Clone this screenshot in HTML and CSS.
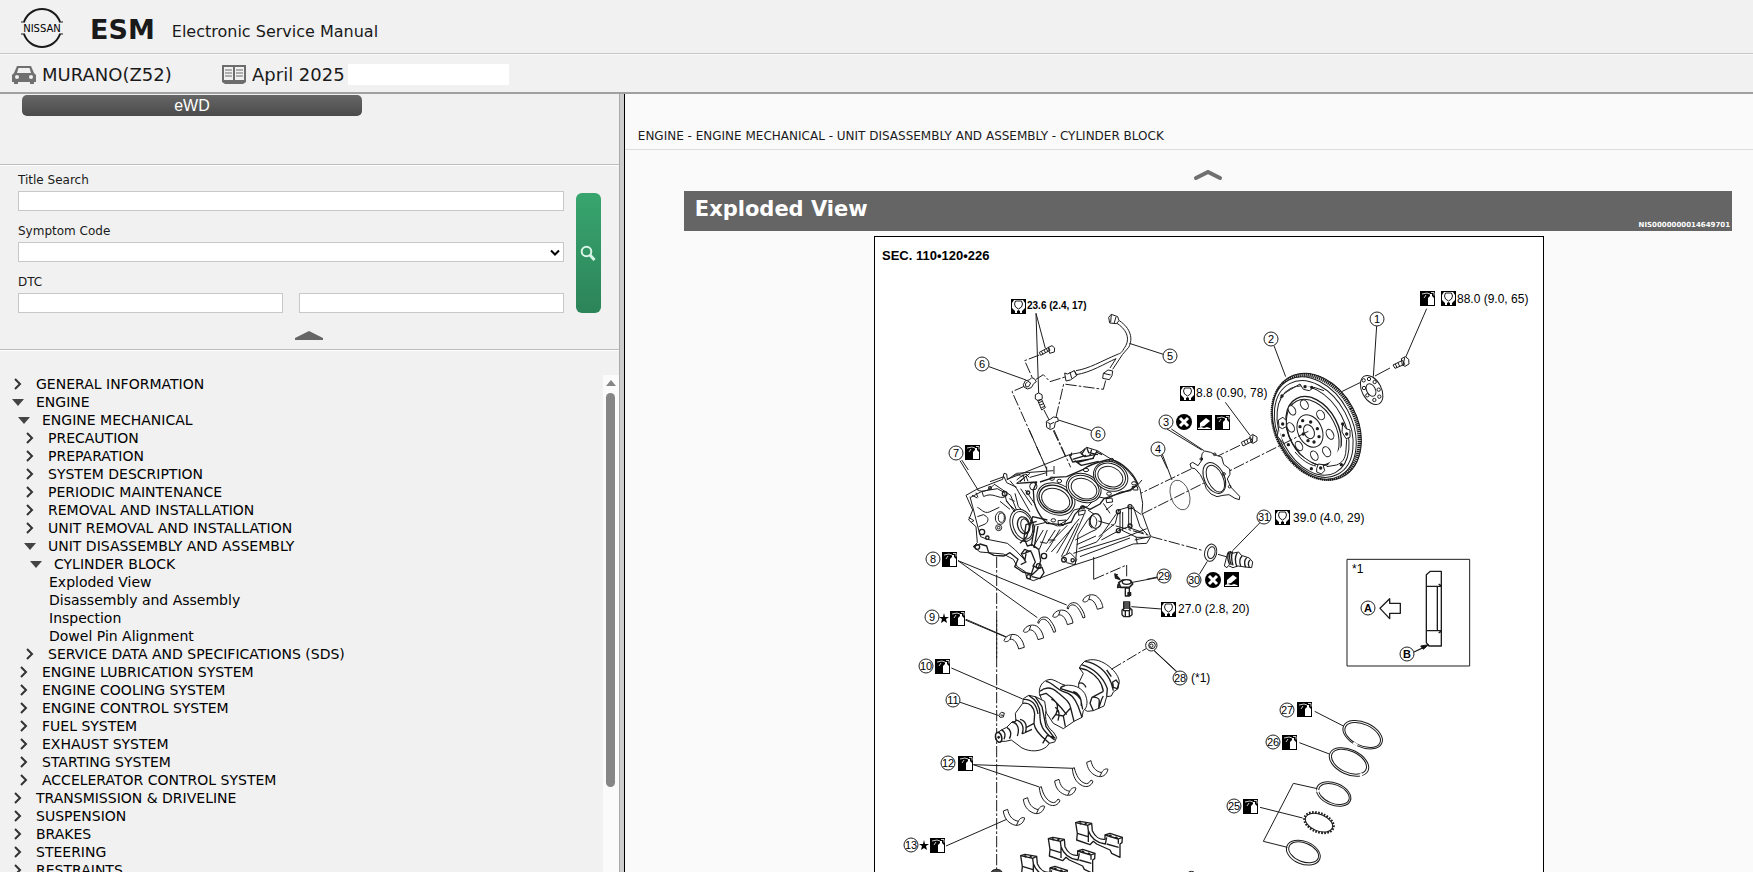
FILE: index.html
```html
<!DOCTYPE html>
<html lang="en">
<head>
<meta charset="utf-8">
<title>ESM Electronic Service Manual</title>
<link rel="stylesheet" href="styles.css">
</head>
<body>
<svg class="defs" aria-hidden="true">
  <defs>
    <symbol id="closed" viewBox="0 0 10 14"><path d="M2 2l5 5-5 5" fill="none" stroke="#333" stroke-width="2"/></symbol>
    <symbol id="open" viewBox="0 0 12 14"><path d="M0 4h12l-6 7z" fill="#444"/></symbol>
    <symbol id="torque" viewBox="0 0 15 15"><path d="M0 0h15v15H0z"/><path d="M3 1h9l2 3v5l-3 3v2H9v-2l-1.500-1L6 12v2H4v-2L1 9V4z" fill="#fff"/><path d="M4.500 2h6l1 3-1 3-3 2-3-2-1-3z" fill="#fff" stroke="#000" stroke-width=".9"/><path d="M6 12h3v3H6z"/></symbol>
    <symbol id="oil" viewBox="0 0 15 15"><path d="M0 0h15v15H0z"/><path d="M8 14V7l2-2V3h2v2l2 2v7z" fill="#fff"/><path d="M2 3l5-1 3 1M6 4L4 7M11 1.500h3v3" stroke="#fff" fill="none" stroke-width=".8"/></symbol>
    <symbol id="seal" viewBox="0 0 15 15"><path d="M0 0h15v15H0z"/><path d="M3 8l6-5 4 3-6 5-4 1zM1 13l3-1 3 1 3-1 3 1 1 1H1z" fill="#fff"/></symbol>
    <symbol id="cross" viewBox="0 0 16 16"><circle cx="8" cy="8" r="8"/><path d="M4 4l8 8M12 4l-8 8" stroke="#fff" stroke-width="3"/></symbol>
  </defs>
</svg>

<header class="brand">
  <svg class="logo" viewBox="0 0 48 40" role="img" aria-label="Nissan">
    <path d="M6 14a19 19 0 0 1 36 0M6 26a19 19 0 0 0 36 0" fill="none" stroke="#1a1a1a" stroke-width="2"/>
    <path d="M3 14h4M41 14h4M3 26h4M41 26h4" stroke="#1a1a1a"/>
    <text x="24" y="24" text-anchor="middle" class="logo-text">NISSAN</text>
  </svg>
  <h1>ESM</h1>
  <span class="tagline">Electronic Service Manual</span>
</header>

<div class="vehicle">
  <svg class="vehicle-icon" viewBox="0 0 24 20"><path d="M5 1h14l3 7 2 2v7h-2v2h-4v-2H6v2H2v-2H0v-7l2-2z" fill="#707070"/><path d="M6.500 3h11L19 8H5z" fill="#f1f1f1"/><circle cx="5" cy="12" r="2" fill="#f1f1f1"/><circle cx="19" cy="12" r="2" fill="#f1f1f1"/></svg>
  <span class="model">MURANO(Z52)</span>
  <svg class="vehicle-icon" viewBox="0 0 24 20"><path d="M0 0h24v17l-3 2H3l-3-2z" fill="#6d6d6d"/><path d="M2 2h9v13H2zM13 2h9v13h-9z" fill="#f1f1f1"/><path d="M3 5h7M3 8h7M3 11h7M14 5h7M14 8h7M14 11h7" stroke="#6d6d6d"/></svg>
  <span class="edition">April 2025</span>
  <span class="blank"></span>
</div>

<main class="panes">
  <aside class="side">
    <div class="shortcuts"><button class="ewd" type="button">eWD</button></div>
    <form class="search">
      <div class="fields">
        <label for="title">Title Search</label>
        <input id="title" type="text">
        <label for="symptom">Symptom Code</label>
        <span class="select-box"><select id="symptom"><option></option></select>
          <svg viewBox="0 0 10 8"><path d="M1 1.500l4 4 4-4" fill="none" stroke="#000" stroke-width="2"/></svg></span>
        <label for="dtc">DTC</label>
        <div class="pair"><input id="dtc" type="text"><input type="text" aria-label="DTC second code"></div>
      </div>
      <button class="go" type="submit" aria-label="Search"><svg viewBox="0 0 16 16"><circle cx="6.500" cy="6.500" r="4.800" fill="none" stroke="#d9f5e6" stroke-width="2"/><path d="M10 10l4.500 5" stroke="#d9f5e6" stroke-width="3"/></svg></button>
      <button class="fold" type="button" aria-label="Collapse search"><svg viewBox="0 0 28 9"><path d="M0 7L14 0l14 7v2H0z" fill="#666"/></svg></button>
    </form>
    <div class="tree-area">
      <nav class="tree" aria-label="Contents">
        <ul>
          <li><button type="button"><svg><use href="#closed"/></svg>GENERAL INFORMATION</button></li>
          <li><button type="button"><svg><use href="#open"/></svg>ENGINE</button>
            <ul>
              <li><button type="button"><svg><use href="#open"/></svg>ENGINE MECHANICAL</button>
                <ul>
                  <li><button type="button"><svg><use href="#closed"/></svg>PRECAUTION</button></li>
                  <li><button type="button"><svg><use href="#closed"/></svg>PREPARATION</button></li>
                  <li><button type="button"><svg><use href="#closed"/></svg>SYSTEM DESCRIPTION</button></li>
                  <li><button type="button"><svg><use href="#closed"/></svg>PERIODIC MAINTENANCE</button></li>
                  <li><button type="button"><svg><use href="#closed"/></svg>REMOVAL AND INSTALLATION</button></li>
                  <li><button type="button"><svg><use href="#closed"/></svg>UNIT REMOVAL AND INSTALLATION</button></li>
                  <li><button type="button"><svg><use href="#open"/></svg>UNIT DISASSEMBLY AND ASSEMBLY</button>
                    <ul>
                      <li><button type="button"><svg><use href="#open"/></svg>CYLINDER BLOCK</button>
                        <ul class="leaves">
                          <li><a href="#view">Exploded View</a></li>
                          <li><a href="#assembly">Disassembly and Assembly</a></li>
                          <li><a href="#inspection">Inspection</a></li>
                          <li><a href="#dowel">Dowel Pin Alignment</a></li>
                        </ul>
                      </li>
                    </ul>
                  </li>
                  <li><button type="button"><svg><use href="#closed"/></svg>SERVICE DATA AND SPECIFICATIONS (SDS)</button></li>
                </ul>
              </li>
              <li><button type="button"><svg><use href="#closed"/></svg>ENGINE LUBRICATION SYSTEM</button></li>
              <li><button type="button"><svg><use href="#closed"/></svg>ENGINE COOLING SYSTEM</button></li>
              <li><button type="button"><svg><use href="#closed"/></svg>ENGINE CONTROL SYSTEM</button></li>
              <li><button type="button"><svg><use href="#closed"/></svg>FUEL SYSTEM</button></li>
              <li><button type="button"><svg><use href="#closed"/></svg>EXHAUST SYSTEM</button></li>
              <li><button type="button"><svg><use href="#closed"/></svg>STARTING SYSTEM</button></li>
              <li><button type="button"><svg><use href="#closed"/></svg>ACCELERATOR CONTROL SYSTEM</button></li>
            </ul>
          </li>
          <li><button type="button"><svg><use href="#closed"/></svg>TRANSMISSION &amp; DRIVELINE</button></li>
          <li><button type="button"><svg><use href="#closed"/></svg>SUSPENSION</button></li>
          <li><button type="button"><svg><use href="#closed"/></svg>BRAKES</button></li>
          <li><button type="button"><svg><use href="#closed"/></svg>STEERING</button></li>
          <li><button type="button"><svg><use href="#closed"/></svg>RESTRAINTS</button></li>
        </ul>
      </nav>
      <div class="scroll"><svg viewBox="0 0 10 6"><path d="M0 6l5-6 5 6z" fill="#858585"/></svg><div class="thumb"></div></div>
    </div>
  </aside>
  <div class="splitter"></div>

  <section class="content">
    <p class="crumbs">ENGINE - ENGINE MECHANICAL - UNIT DISASSEMBLY AND ASSEMBLY - CYLINDER BLOCK</p>
    <button class="up" type="button" aria-label="Collapse header"><svg viewBox="0 0 30 12"><path d="M3 9l12-6 12 6" fill="none" stroke="#707070" stroke-width="4" stroke-linecap="round"/></svg></button>
    <div class="heading" id="view"><h2>Exploded View</h2><span>NIS0000000014649701</span></div>
    <figure class="figure">
      <svg viewBox="875 237 668 700" role="img" aria-label="Cylinder block exploded view">
        <!-- wiring harness and sensors -->
        <g class="ink" transform="translate(870 230) scale(.333333)">
          <path class="lead" d="M498 250L526 355M498 250L506 490M357 410L468 450M778 340L880 373M565 570L665 602M275 690L295 720M891 597L995 660M873 676L892 716"/>
          <path class="axis" d="M508 375L464 392 490 450M498 448L520 434 540 455 588 440M465 468L426 485 530 718M522 540L540 575M550 602L610 730M558 562L581 462 700 478 708 448"/>
          <path d="M738 278C768 296 780 322 768 346C758 362 755 370 745 372C690 395 660 415 618 422M748 272C782 295 790 326 776 352L757 374 728 418M618 434C662 428 705 400 738 386L720 414"/>
          <path class="solid" d="M716 262l8-9 19 7 4 12-8 9-20-2zM724 253l-2 24M738 261l-6 20M584 429l9 3 20-10 8 14-20 14-13 3zM613 422l6 14M600 426l5 19M700 430l14-10 14 3-2 14-8 12-20-4zM700 430l22 5M508 367l28-15 4 9-28 15zM535 352l11-5 8 7-1 12-14 4zM514 364l5 9M522 360l5 9M529 356l5 9M496 494l10-5 10 5 1 12-11 7-10-6zM503 511l12-3 11 25-11 7zM506 518l11-4M510 525l11-4M514 533l11-4"/>
          <path class="solid" d="M460 464l6-12 12-2 7-7 8 3 6 9-8 6-7 12-12 4-10-6zM466 462l8-8 8 5-6 11-8 1zM529 574l13-7 8-6 13 2 2 11-9 2-3 17-12 6-11-7zM532 577l10 5 10-5M540 582v14"/>
        </g>
        <!-- flywheel, drive plate, seal retainer -->
        <g class="ink" transform="translate(1160 230) scale(.333333)">
          <path class="lead" d="M342 347L377 440M650 288L640 440M800 236L736 384M196 517L270 616M34 597L132 662M5 668L36 750"/>
          <path class="lead" d="M690 414L645 438M612 452L545 485"/>
          <g transform="rotate(-28 470 590)"><ellipse cx="470" cy="590" rx="122" ry="169" class="solid"/><ellipse cx="468" cy="590" rx="119" ry="165" class="teeth"/><ellipse cx="462" cy="590" rx="113" ry="163" class="solid"/><ellipse cx="459" cy="592" rx="106" ry="154"/><ellipse cx="455" cy="595" rx="96" ry="143"/><ellipse cx="456" cy="597" rx="74" ry="110" stroke-width="4"/><ellipse cx="452" cy="599" rx="70" ry="105"/></g>
          <path class="solid" d="M420 462l10 16 18 4 14-10 30 10M355 570l14-8 10 10v18l-12 6-10-5zM356 592l-4 26 16 20M470 716l5-14 14 2 5 18-10 10-14-6zM548 580l10 16 12 4v22l-12 4-12-20zM420 462C390 480 372 488 360 505M560 628L558 660C556 690 545 698 530 705L500 710M468 708C448 705 425 690 405 666"/>
          <g class="solid"><ellipse cx="433" cy="524" rx="11" ry="15" transform="rotate(-28 433 524)"/><ellipse cx="396" cy="541" rx="10" ry="15" transform="rotate(-28 396 541)"/><ellipse cx="482" cy="555" rx="11" ry="15" transform="rotate(-28 482 555)"/><ellipse cx="392" cy="592" rx="10" ry="15" transform="rotate(-28 392 592)"/><ellipse cx="510" cy="613" rx="10" ry="16" transform="rotate(-28 510 613)"/><ellipse cx="417" cy="648" rx="10" ry="15" transform="rotate(-28 417 648)"/><ellipse cx="500" cy="665" rx="11" ry="16" transform="rotate(-28 500 665)"/><ellipse cx="463" cy="677" rx="10" ry="15" transform="rotate(-28 463 677)"/></g>
          <ellipse class="solid" cx="450" cy="603" rx="36" ry="51" transform="rotate(-25 450 603)"/><ellipse cx="447" cy="605" rx="15" ry="22" transform="rotate(-25 447 605)"/>
          <path d="M428 572h.1M420 590h.1M430 612h.1M444 632h.1M462 636h.1M477 620h.1M472 596h.1M452 576h.1" stroke-width="10" stroke-linecap="round"/>
          <path class="dots" d="M435 470h.1M455 472h.1M366 498h.1M368 582h.1M370 616h.1M385 644h.1M454 716h.1M482 714h.1M544 704h.1M560 612h.1M548 582h.1"/>
          <ellipse class="solid" cx="635" cy="480" rx="29" ry="47" transform="rotate(-28 635 480)"/><ellipse cx="633" cy="480" rx="13" ry="20" transform="rotate(-28 633 480)"/>
          <g><circle cx="611" cy="451" r="5"/><circle cx="627" cy="447" r="5"/><circle cx="644" cy="456" r="5"/><circle cx="612" cy="474" r="5"/><circle cx="622" cy="496" r="5"/><circle cx="643" cy="510" r="5"/><circle cx="658" cy="500" r="5"/><circle cx="656" cy="479" r="5"/></g>
          <path class="solid" d="M699 405l29-14 6 12-29 12zM724 386l12-6 10 8 1 14-12 7-8-4zM706 402l5 11M714 398l5 11M734 382l-4 22M244 637l28-14 5 11-28 14zM269 620l9-7 13 8v12l-12 7-6-3zM252 633l5 11M260 629l5 11M279 615l-2 23"/>
          <path class="axis" d="M445 604L210 722M240 646L-265 890M170 740L-250 950"/>
        </g>
        <g class="ink" transform="translate(1150 450) scale(.333333)">
          <path class="solid" d="M120 42l8-5 16 10 10-14 2-22 8-8 18 4 20 10 13 4 6 22 18 14 1 16-8 14 10 24 27 28-1 10-13-4-18-11-18 2-18 4-18-8-14-16-6-18-12-24-16-18-11-2z"/>
          <ellipse cx="193" cy="84" rx="30" ry="49" transform="rotate(-25 193 84)"/><ellipse cx="196" cy="86" rx="23" ry="43" transform="rotate(-25 196 86)"/>
          <circle cx="154" cy="27" r="4"/><circle cx="222" cy="72" r="4"/><circle cx="239" cy="110" r="4"/><circle cx="194" cy="13" r="4"/>
          <ellipse cx="90" cy="135" rx="28" ry="46" transform="rotate(-18 90 135)" stroke-width="2"/>
          <path class="axis" d="M4 260L160 302M204 313L232 321"/><path class="lead" d="M148 373L172 334M330 218L248 302M-10 388L22 381M-56 470L34 477M78 664L12 602"/>
          <ellipse class="solid" cx="182" cy="308" rx="18" ry="26" transform="rotate(12 182 308)"/><ellipse cx="184" cy="308" rx="11" ry="18" transform="rotate(12 184 308)"/>
          <path class="solid" d="M230 320l4-13 9-3 3 6 20-4 8 10 24 8 10 12-3 17-20-2-22-3-14 5-14-6-4 6-8-5z"/><path d="M237 306c-6 12-4 25 2 38M242 305c-6 12-4 25 2 40M248 304c-6 12-4 25 1 42M262 307c-8 14-8 28-1 44M276 318c-7 8-8 20-4 30M290 323c-7 8-8 18-3 29M300 330c-6 6-6 14-2 22" stroke-width="4"/>
          <path d="M591 328h368v320H591z"/><path d="M841 364h33v224h-37l-8-10V374zM829 409h45M829 542h45M862 409v133M866 402l8 6M866 549l8-6M751 460h-32v-14l-29 29 29 31v-16h32zM792 606l34-16" stroke-width="4"/><path d="M836 584l-24 4 8 10z" fill="#111"/>
        </g>
        <!-- cylinder block -->
        <g class="ink" transform="translate(900 430) scale(.333333)">
          <path class="axis" d="M290 380V690"/>
          <path class="solid" d="M198 196L230 178 308 148 312 130 320 132 322 148 508 74 540 68 560 52 592 62 628 84 670 108 700 142 720 176 728 220 726 248 752 320 740 340 700 342 600 380 520 406 400 452 380 444 376 425 352 410 340 388 310 372 240 366 220 350 232 338 228 290 206 270 218 240z"/>
          <path d="M270 155L312 140L320 158 350 172M282 162l50 34 20 50 50 40 40-10 30 12 30-18 20-30 40-10 30-30 30 6 40-20 30-4 24-20 10-12M230 178c20 14 40 0 52-14M320 150L350 130 460 122M350 160L390 130M330 152l20 24M350 176l40 70M362 176l34 50M376 180l30 44M345 190l10 40 20 18"/>
          <path d="M350 160L410 156 400 180 402 214C410 246 430 270 440 280L490 284 514 276 524 254 548 228 570 238 600 222 612 206 640 196 690 180 714 162C694 118 650 84 620 90C580 100 560 110 550 118L500 140 462 142 420 156" stroke-width="4"/>
          <ellipse class="solid" cx="468" cy="207" rx="59" ry="46" transform="rotate(25 468 207)"/><ellipse cx="467" cy="207" rx="52" ry="39" transform="rotate(25 467 207)" stroke-width="4"/><ellipse cx="467" cy="209" rx="44" ry="32" transform="rotate(25 467 209)"/>
          <ellipse class="solid" cx="551" cy="174" rx="54" ry="42" transform="rotate(24 551 174)"/><ellipse cx="551" cy="174" rx="48" ry="36" transform="rotate(24 551 174)"/><ellipse cx="552" cy="176" rx="40" ry="29" transform="rotate(24 552 176)"/>
          <ellipse class="solid" cx="632" cy="139" rx="53" ry="43" transform="rotate(24 632 139)"/><ellipse cx="631" cy="138" rx="47" ry="37" transform="rotate(24 631 138)"/><ellipse cx="631" cy="140" rx="39" ry="29" transform="rotate(24 631 140)"/>
          <g><circle cx="400" cy="169" r="11"/><ellipse cx="456" cy="146" rx="7" ry="5"/><ellipse cx="478" cy="153" rx="7" ry="5"/><ellipse cx="558" cy="120" rx="8" ry="5"/><ellipse cx="460" cy="271" rx="7" ry="5"/><ellipse cx="548" cy="232" rx="7" ry="5"/><ellipse cx="627" cy="191" rx="7" ry="5"/><ellipse cx="702" cy="160" rx="7" ry="5"/><ellipse cx="634" cy="90" rx="7" ry="5"/><path d="M474 272l25-2-8 16-15 2zM536 244l20-4-2 12-18 4zM618 206l18-2 2 12-18 2zM696 170l16 0 2 10-14 0z"/></g>
          <path d="M508 74l10 22 60-10 14-24M518 88l40-12M530 98l52-14M515 68l-2 10M540 66l14 14 30-6M560 52l6 16 28 6M524 92l20 14 52-12M556 56l-12 18M575 58l-6 20M588 66l18 8" stroke-width="4"/>
          <path d="M210 200l8 30 18 70 6 20 20 8 60 12 24 20 28 30M212 202l34-18 46-8 22 12 6 28 32 30 14 28M216 196l16 8M228 188l6 14M246 184l4 14M250 200c30-16 46 10 66 0M232 232c10 4 20 20 36 14l30-14M232 260l18-6c14 6 20 16 6 28l-20 8M206 262l16 10-8 4"/>
          <ellipse class="solid" cx="366" cy="286" rx="34" ry="50" transform="rotate(-20 366 286)"/><ellipse cx="368" cy="286" rx="28" ry="43" transform="rotate(-20 368 286)"/><ellipse cx="371" cy="286" rx="18" ry="26" transform="rotate(-15 371 286)" stroke-width="4"/><ellipse cx="375" cy="287" rx="12" ry="21" transform="rotate(-15 375 287)"/>
          <ellipse cx="301" cy="264" rx="15" ry="19"/><ellipse cx="304" cy="263" rx="9" ry="14"/><circle cx="296" cy="293" r="9"/><circle cx="296" cy="293" r="4"/>
          <g stroke-width="4"><circle cx="314" cy="191" r="7"/><circle cx="270" cy="174" r="4"/><circle cx="384" cy="188" r="5"/><circle cx="246" cy="306" r="8"/><circle cx="262" cy="323" r="5"/><circle cx="232" cy="351" r="7"/><circle cx="416" cy="408" r="7"/><circle cx="432" cy="378" r="8"/><circle cx="386" cy="440" r="6"/><circle cx="690" cy="230" r="6"/><circle cx="690" cy="288" r="6"/><circle cx="655" cy="245" r="6"/><circle cx="655" cy="302" r="6"/><circle cx="492" cy="389" r="7"/><circle cx="518" cy="391" r="5"/></g>
          <path d="M220 350l20-8 20 6 6 20 16 8 30 2 18-10 24 20-10 22 24 16 26 6 8-24 12 8 12-4 6 16-12 18-24-6M390 440l24-22 8-26-6-34-20-14-14 4-10-24 6-40 32-10M362 404l16-8-14-24 10-14 20 8 12 30-8 14M368 372l26-10M380 360l-6 34M360 340l20-20 18-60 44 10M394 348l10-60M402 354l12-66" stroke-width="4"/>
          <path d="M430 300l-30 50M442 300l-24 58M466 300l-26 40-20-4M480 298l-26 44-16 24M444 330h22M448 340l54-54M454 366L520 290M470 370l48-80 20-24M484 380l50-100M500 372l52-118M526 404l8-90 30-46 20-14M526 330l50-26 14-6M530 344l58-26M536 356l54-20 18-22M488 380l22-12 20 20-6 16-24-6zM520 370l30-10 130-40 60-24M540 380l150-56M596 320l50-40 10-40 34-10 34 24M604 330l60-32 28-10M608 310l42-60M660 246v56M668 246v56M686 234v54M694 234v54M664 300l46 22 36 0M690 294l40 14M704 330l46-10M708 320l4 22M700 230l20 60 22 24M618 240l20-16M610 220l20 30M584 254l-20-14"/>
          <ellipse class="solid" cx="587" cy="273" rx="17" ry="22" stroke-width="4"/><path d="M580 258c10 4 14 18 6 32M576 255l-8 10v20l8 10"/>
          <path d="M338 140c8-10 22-6 26 0l14-8 10 10M350 150l20-16 4 20M360 156l18-18 6 16M440 110v28M462 108v24M390 142l50-14M320 212l24 34M300 214l30 24M328 206l16 8"/>
          <path class="axis" d="M388 0L440 118M462 0L512 112M595 273L754 318"/>
          <path class="lead" d="M180 92L234 180M174 392L412 563M174 392L500 525M198 568L322 622M692 458L772 443"/>
          <path class="solid" d="M312 632C318 612 345 608 357 620C368 630 372 645 373 652L356 657C352 640 342 625 330 628C326 634 316 638 312 632zM330 628l4-12"/>
          <path class="solid" d="M370 604C376 584 403 580 415 592C426 602 430 617 431 624L414 629C410 612 400 597 388 600C384 606 374 610 370 604zM388 600l4-12M458 559C464 539 491 535 503 547C514 557 518 572 519 579L502 584C498 567 488 552 476 555C472 561 462 565 458 559zM476 555l4-12M548 513C554 493 581 489 593 501C604 511 608 526 609 533L592 538C588 521 578 506 566 509C562 515 552 519 548 513zM566 509l4-12"/>
          <path class="solid" d="M413 578C418 558 440 556 450 570C460 583 466 595 467 605L461 607C455 590 447 576 438 570C428 564 418 570 417 580zM501 535C506 515 528 513 538 527C548 540 554 552 555 562L549 564C543 547 535 533 526 527C516 521 506 527 505 537z"/>
          <path d="M581 381v67"/><path class="axis" d="M581 448L680 405V445"/>
          <path class="solid" d="M645 432l14 16-12-4zM652 432l-6 12M656 458l12-8 24 2 6 10-10 10-26 0zM655 462l-2 10 10-2" stroke-width="5"/><ellipse class="solid" cx="680" cy="456" rx="13" ry="7" stroke-width="4"/><path class="solid" d="M676 474h12v24h-12zM684 488h8v8h-8zM671 516h18v26h-18zM666 540l8-6h16l6 6v14l-8 6h-16l-6-6zM671 522h18M671 528h18M671 534h18M676 542v16M688 542v16" stroke-width="4"/>
        </g>
        <!-- crankshaft, bearings and caps -->
        <g class="ink" transform="translate(890 620) scale(.333333)">
          <path class="axis" d="M320 0V750"/>
          <path class="solid" d="M566 190L580 160 568 144 574 134 584 124C606 114 630 120 650 134C670 148 684 164 688 184L684 206 670 216 664 228 650 230 642 258 610 272 592 274 576 264 566 236z"/>
          <path d="M584 124C620 128 650 154 664 190L670 212M574 134C610 144 640 170 652 206L650 230M568 144L590 150C620 166 636 186 640 214M640 214L606 232 600 250 610 272M606 232c10-2 22 2 22 10l-2 24M640 228c-8 12-8 24-14 36M668 186l10-6 8 10-4 16-12-4zM566 190c10-4 18 4 22 12M650 150l14 20" stroke-width="4"/>
          <path class="solid" d="M448 220C446 194 464 178 484 178C500 182 510 192 526 196C550 194 570 200 584 220C594 240 594 262 580 272L576 292 552 304 520 326 490 310 470 280z"/>
          <path d="M450 214C466 200 484 200 504 218C530 240 540 248 542 264L552 304M468 184c20 4 30 22 50 30c26 6 36 20 46 44l12 34M526 196c-8 4-16 4-14 10C530 214 560 214 572 238L578 268M448 226l20-6 18 14 28 30 16 20M484 238c20 6 22 24 14 44l-12 16M496 262c12 10 14 20 8 40M550 214c14 4 26 20 24 44M542 264l-22 24 6 32M520 288l-22-4" stroke-width="4"/>
          <path class="solid" d="M378 304L376 280 398 250 400 236 416 226 436 230 464 244 468 270C464 296 468 320 490 336L500 352 494 366 478 370 470 380C450 396 420 396 396 384L364 360 346 364 330 364 318 360 318 342 334 330 350 322 366 306z"/>
          <path d="M398 250C420 246 432 262 434 282L432 310C434 330 450 346 470 362L478 370M416 226C440 240 450 258 450 284C448 314 458 334 494 360M400 238c30-2 40 20 44 44M436 230l20 30 12 60 24 32M366 306C382 308 390 326 382 348M376 300C396 302 404 322 396 342M390 298c18 4 22 20 16 40M334 330c10 2 14 14 8 28M350 322c12 6 16 20 8 34M396 342l30-14M432 310l-26 14M458 370l14-24 24 8" stroke-width="4"/>
          <ellipse cx="326" cy="352" rx="9" ry="15" transform="rotate(-14 326 352)" class="solid" stroke-width="5"/><circle cx="326" cy="352" r="3" fill="#111"/>
          <path class="lead" d="M226 0L345 50M184 144L398 237M208 246L324 286M250 434L550 445M250 434L448 501M168 678L350 598M793 92L862 156"/><path class="axis" d="M664 148L768 86"/>
          <circle class="solid" cx="784" cy="76" r="17"/><circle cx="786" cy="76" r="10"/><circle cx="784" cy="77" r="5"/>
          <path class="solid" d="M326 285l8-8 9 2-3 12-10 1zM331 285l9 1"/>
          <g id="shell"><path class="solid" d="M340 573L353 568C356 585 365 600 385 604C388 596 398 590 404 594C400 612 385 620 370 614C350 606 342 590 340 573zM385 604l-6 12"/></g>
          <use href="#shell" x="60" y="-35"/><use href="#shell" x="154" y="-90"/><use href="#shell" x="250" y="-146"/>
          <g id="thrust"><path class="solid" d="M448 503L454 500C458 520 470 545 490 548C498 548 502 540 504 537L510 541C505 556 490 560 478 554C458 545 450 525 448 503z"/></g><use href="#thrust" x="99" y="-57"/>
          <g id="cap" stroke-width="4"><path class="solid" d="M557 608L570 604 605 610 607 632C615 650 630 660 645 658L645 645 660 640 697 652 696 668 690 672V712L665 700 660 690 620 672 610 664 600 674 560 660 562 640z"/><path d="M557 608l36 8 12-6M593 616l2 16C602 652 618 668 646 672L650 652M645 645l40 12 12-5M685 657v14M595 630v36M650 672l36 10M562 640l32 10"/><path d="M568 608l6 4M584 610l6 3M658 645l6 4M676 651l6 4" stroke-width="6"/></g>
          <use href="#cap" x="-82" y="48"/><use href="#cap" x="-165" y="99"/>
          <ellipse cx="320" cy="757" rx="16" ry="9" fill="#444"/><path d="M896 756q8-4 16 0"/>
        </g>
        <!-- piston rings -->
        <g class="ink" transform="translate(1200 670) scale(.333333)">
          <path d="M344 124L430 168M298 218L388 252M180 412L308 444M352 356L280 340 190 514 262 532"/>
          <g fill="none"><ellipse cx="488" cy="194" rx="63" ry="37" transform="rotate(25 488 194)"/><ellipse cx="488" cy="195" rx="57" ry="32" transform="rotate(25 488 195)"/><ellipse cx="447" cy="276" rx="63" ry="37" transform="rotate(25 447 276)"/><ellipse cx="447" cy="275" rx="56" ry="32" transform="rotate(25 447 275)"/><ellipse cx="401" cy="372" rx="54" ry="33" transform="rotate(22 401 372)"/><ellipse cx="402" cy="372" rx="48" ry="28" transform="rotate(22 402 372)"/><ellipse cx="357" cy="458" rx="46" ry="28" transform="rotate(22 357 458)" class="rail"/><ellipse cx="357" cy="458" rx="43" ry="25" transform="rotate(22 357 458)"/><ellipse cx="310" cy="548" rx="53" ry="34" transform="rotate(22 310 548)"/><ellipse cx="311" cy="547" rx="47" ry="28" transform="rotate(22 311 547)"/></g>
          <path d="M460 218l12 8M484 320l-2-10M349 362l10 2" class="gap"/>
        </g>
        <!-- service symbols -->
        <g>
          <use href="#torque" x="1011" y="299" width="15" height="15"/><use href="#torque" x="1180" y="386" width="15" height="15"/><use href="#torque" x="1441" y="291" width="15" height="15"/><use href="#torque" x="1275" y="510" width="15" height="15"/><use href="#torque" x="1161" y="602" width="15" height="15"/>
          <use href="#oil" x="965" y="445" width="15" height="15"/><use href="#oil" x="1420" y="291" width="15" height="15"/><use href="#oil" x="1215" y="415" width="15" height="15"/><use href="#oil" x="942" y="552" width="15" height="15"/><use href="#oil" x="950" y="611" width="15" height="15"/><use href="#oil" x="935" y="659" width="15" height="15"/><use href="#oil" x="958" y="756" width="15" height="15"/><use href="#oil" x="930" y="838" width="15" height="15"/><use href="#oil" x="1297" y="702" width="15" height="15"/><use href="#oil" x="1282" y="735" width="15" height="15"/><use href="#oil" x="1243" y="799" width="15" height="15"/>
          <use href="#seal" x="1197" y="415" width="15" height="15"/><use href="#seal" x="1224" y="572" width="15" height="15"/><use href="#cross" x="1176" y="414" width="16" height="16"/><use href="#cross" x="1205" y="572" width="16" height="16"/>
          <path d="M944 613l1 4h4l-3 2 1 4-3-2-3 2 1-4-3-2h4zM924 840l1 4h4l-3 2 1 4-3-2-3 2 1-4-3-2h4z"/>
        </g>
        <g class="balloon"><circle cx="1377" cy="319" r="7"/><circle cx="1271" cy="339" r="7"/><circle cx="1166" cy="422" r="7"/><circle cx="1158" cy="449" r="7"/><circle cx="1170" cy="356" r="7"/><circle cx="982" cy="364" r="7"/><circle cx="1098" cy="434" r="7"/><circle cx="956" cy="453" r="7"/><circle cx="933" cy="559" r="7"/><circle cx="932" cy="617" r="7"/><circle cx="926" cy="666" r="7"/><circle cx="953" cy="700" r="7"/><circle cx="948" cy="763" r="7"/><circle cx="911" cy="845" r="7"/><circle cx="1234" cy="806" r="7"/><circle cx="1273" cy="742" r="7"/><circle cx="1287" cy="710" r="7"/><circle cx="1180" cy="678" r="7"/><circle cx="1164" cy="576" r="7"/><circle cx="1194" cy="580" r="7"/><circle cx="1264" cy="517" r="7"/><circle cx="1368" cy="608" r="7"/><circle cx="1407" cy="654" r="7"/></g>
        <g class="num"><text x="1377" y="323">1</text><text x="1271" y="343">2</text><text x="1166" y="426">3</text><text x="1158" y="453">4</text><text x="1170" y="360">5</text><text x="982" y="368">6</text><text x="1098" y="438">6</text><text x="956" y="457">7</text><text x="933" y="563">8</text><text x="932" y="621">9</text><text x="926" y="670">10</text><text x="953" y="704">11</text><text x="948" y="767">12</text><text x="911" y="849">13</text><text x="1234" y="810">25</text><text x="1273" y="746">26</text><text x="1287" y="714">27</text><text x="1180" y="682">28</text><text x="1164" y="580">29</text><text x="1194" y="584">30</text><text x="1264" y="521">31</text><text x="1368" y="612" class="strong">A</text><text x="1407" y="658" class="strong">B</text></g>
        <g class="spec"><text x="882" y="260" class="sec">SEC. 110•120•226</text><text x="1027" y="309" class="small">23.6 (2.4, 17)</text><text x="1457" y="303">88.0 (9.0, 65)</text><text x="1196" y="397">8.8 (0.90, 78)</text><text x="1293" y="522">39.0 (4.0, 29)</text><text x="1178" y="613">27.0 (2.8, 20)</text><text x="1191" y="682">(*1)</text><text x="1352" y="573">*1</text></g>
      </svg>
    </figure>
  </section>
</main>
</body>
</html>
```
FILE: styles.css
```css
* { box-sizing: border-box; }
body {
  margin: 0;
  height: 100vh;
  display: flex;
  flex-direction: column;
  overflow: hidden;
  background: #f1f1f1;
  color: #1a1a1a;
  font-family: Verdana, "DejaVu Sans", sans-serif;
}
svg { display: block; }
button { font: inherit; color: inherit; border: 0; padding: 0; background: none; }
.defs { position: absolute; width: 0; height: 0; }

.brand {
  flex: none;
  height: 54px;
  padding: 2px 18px 0;
  display: flex;
  align-items: center;
  border-bottom: 1px solid #c6c6c6;
}
.logo { width: 48px; height: 40px; }
.logo-text { font: 10px "DejaVu Sans", sans-serif; }
.brand h1 { margin: 4px 17px 0 24px; font-size: 27px; line-height: 32px; }
.tagline { font-size: 16px; padding-top: 8px; }
.vehicle {
  flex: none;
  height: 40px;
  padding: 2px 12px 0;
  display: flex;
  align-items: center;
  font-size: 18px;
  border-top: 1px solid #fbfbfb;
  border-bottom: 2px solid #a0a0a0;
}
.vehicle-icon { width: 24px; height: 20px; margin-right: 6px; }
.model { width: 180px; }
.edition { width: 96px; white-space: nowrap; }
.blank { width: 161px; height: 21px; background: #fff; }

.panes { flex: 1; min-height: 0; display: grid; grid-template-columns: 35.300% 6px 1fr; }
.side { display: flex; flex-direction: column; min-width: 0; min-height: 0; overflow: hidden; }
.shortcuts { flex: none; height: 71px; padding: 1px 22px; border-bottom: 1px solid #bcbcbc; }
.ewd {
  display: block;
  width: 340px;
  height: 21px;
  border-radius: 5px;
  background: linear-gradient(#666, #4b4b4b);
  color: #fff;
  font: 16px/21px "Liberation Sans", Arial, sans-serif;
}
.search {
  flex: none;
  display: grid;
  grid-template-columns: 1fr 25px;
  column-gap: 12px;
  padding: 6px 18px 9px;
  border-top: 1px solid #fff;
  border-bottom: 1px solid #bcbcbc;
}
.fields { display: flex; flex-direction: column; }
.fields label { font-size: 12px; line-height: 16px; margin-bottom: 3px; }
.fields input, .fields select {
  display: block;
  width: 100%;
  height: 20px;
  margin: 0 0 12px;
  border: 1px solid #c8c8c8;
  border-radius: 0;
  background: #fff;
  appearance: none;
}
.select-box { position: relative; }
.select-box svg { position: absolute; right: 4px; top: 7px; width: 10px; height: 8px; pointer-events: none; }
.pair { display: grid; grid-template-columns: 1fr 1fr; gap: 16px; }
.go {
  height: 120px;
  margin-top: 21px;
  border-radius: 6px;
  background: linear-gradient(#38a56e, #2c8459);
  display: flex;
  align-items: center;
  justify-content: center;
}
.go svg { width: 16px; height: 16px; }
.fold { grid-column: 1 / 3; justify-self: center; margin-top: 6px; }
.fold svg { width: 28px; height: 9px; }

.tree-area { flex: 1; min-height: 0; display: flex; padding-top: 24px; border-top: 1px solid #fff; }
.tree { flex: 1; overflow: hidden; font-size: 14px; line-height: 18px; color: #000; }
.tree ul { list-style: none; margin: 0; padding: 0; }
.tree ul ul { padding-left: 6px; }
.tree > ul { padding-left: 12px; }
.tree button { display: flex; align-items: center; height: 18px; white-space: nowrap; }
.tree button svg { width: 12px; height: 14px; margin-right: 12px; }
.tree .leaves { padding-left: 19px; }
.leaves a { display: block; color: inherit; text-decoration: none; }
.scroll { width: 16px; background: #fbfbfb; padding: 5px 3px 0; }
.scroll svg { width: 10px; height: 6px; }
.thumb { margin-top: 7px; width: 9px; height: 80%; border-radius: 5px; background: #868686; }

.splitter { background: #cdcdcd; border-left: 1px solid #aaa; border-right: 1px solid #000; }

.content { min-width: 0; overflow: hidden; background: #fafafa; display: flex; flex-direction: column; }
.crumbs { flex: none; margin: 0; padding: 34px 13px 5px; font-size: 12px; line-height: 16px; border-bottom: 1px solid #dedede; }
.up { align-self: center; margin: 19px 0 10px 39px; }
.up svg { width: 30px; height: 12px; }
.heading {
  flex: none;
  height: 40px;
  margin: 0 21px 5px 59px;
  padding: 0 2px 0 11px;
  display: flex;
  justify-content: space-between;
  background: #656565;
  color: #fff;
}
.heading h2 { margin: 0; font-size: 21px; line-height: 36px; }
.heading span { align-self: flex-end; font-size: 7px; font-weight: bold; line-height: 11px; }
.figure { flex: none; align-self: center; width: 670px; max-width: 100%; margin: 0 0 0 40px; border: 1px solid #000; background: #fff; }
.figure svg { width: 100%; height: auto; }

.ink { fill: none; stroke: #1c1c1c; stroke-width: 3; stroke-linejoin: round; }
.ink .solid { fill: #fff; }
.axis { stroke-dasharray: 34 6 8 6; }
.teeth { stroke-width: 12; stroke-dasharray: 4 2; }
.rail { stroke-width: 7; stroke-dasharray: 5 4; }
.dots { stroke-width: 10; stroke-linecap: round; }
.gap { stroke: #fff; stroke-width: 7; }
.balloon { fill: #fff; stroke: #222; stroke-width: 1; }
.num { font: 11px "Liberation Sans", Arial, sans-serif; text-anchor: middle; }
.strong { font-weight: bold; }
.spec { font: 12px "Liberation Sans", Arial, sans-serif; }
.small { font-size: 10px; font-weight: bold; }
.sec { font-size: 13px; font-weight: bold; }
```
